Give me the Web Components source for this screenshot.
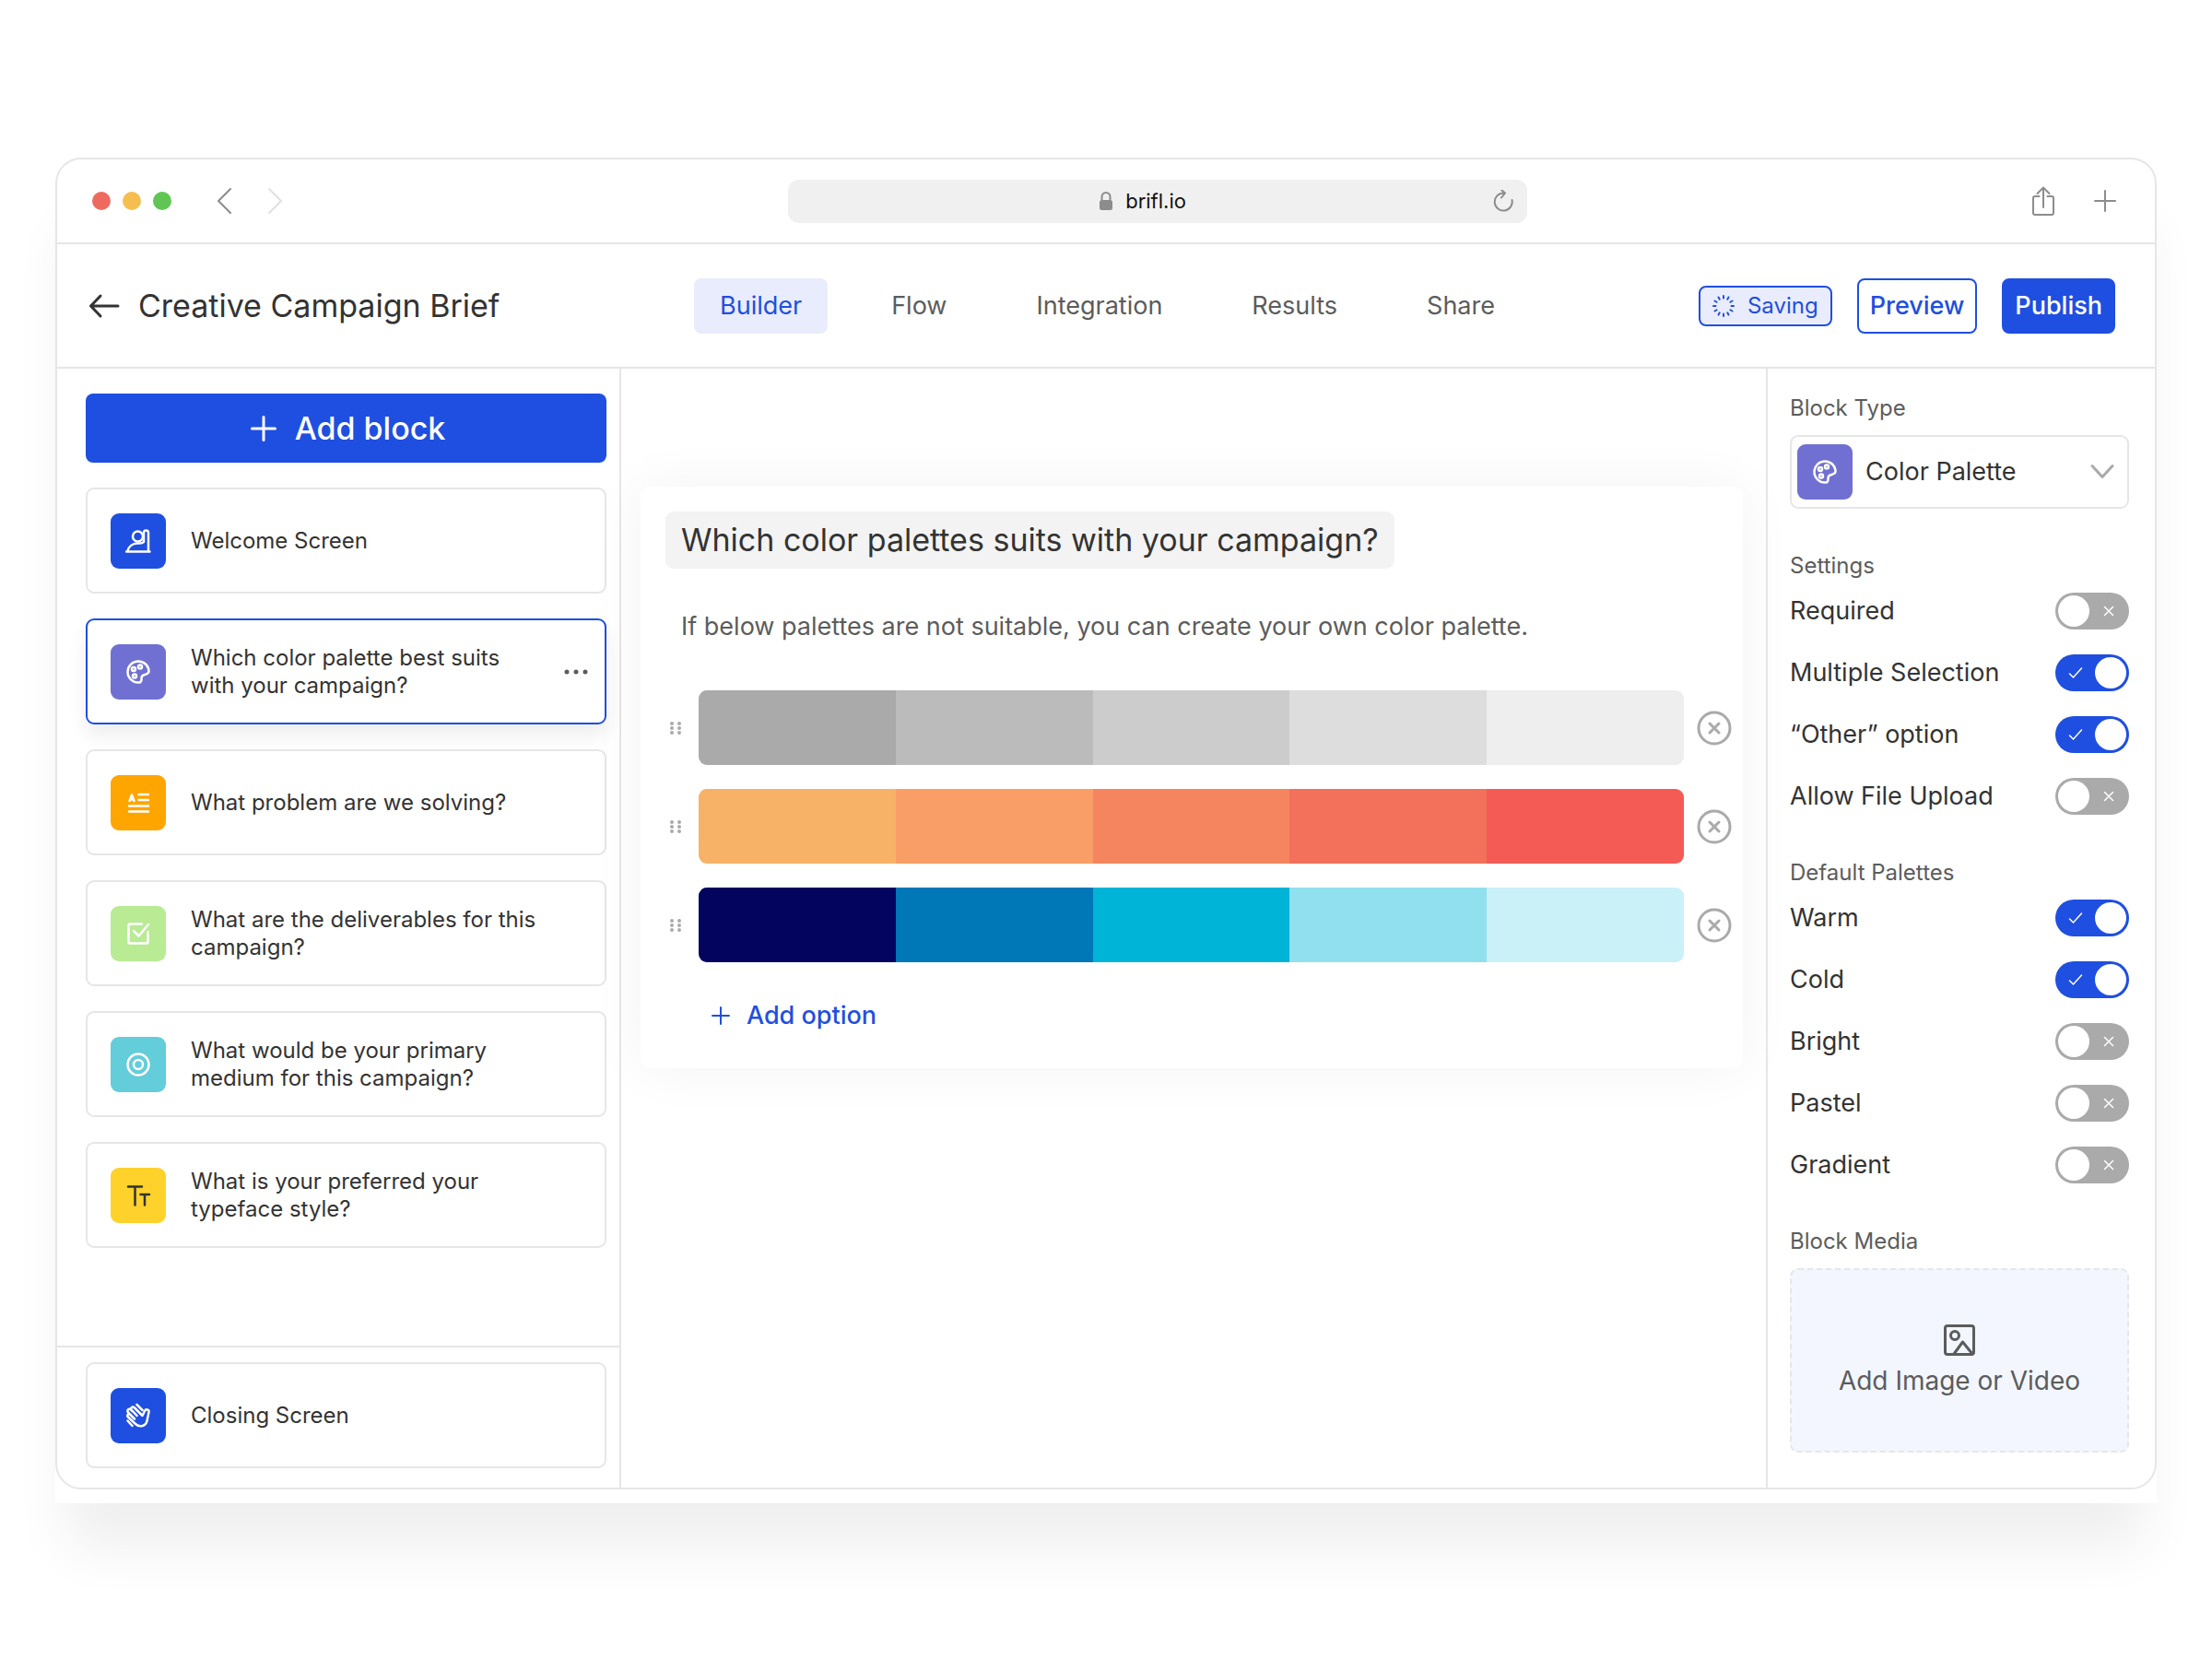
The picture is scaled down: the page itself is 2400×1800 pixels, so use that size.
<!DOCTYPE html>
<html lang="en">
<head>
<meta charset="utf-8">
<meta name="viewport" content="width=device-width, initial-scale=1">
<title>Creative Campaign Brief</title>
<style>
  :root {
    --blue: #1f4fe0;
    --blue-soft: #e9ecfc;
    --ink: #333;
    --ink-soft: #5c5c5c;
    --line: #e6e6e6;
    --muted: #aaa;
  }
  body {
    box-sizing: border-box;
    min-height: 100vh;
    margin: 0;
    padding: 171px 60px 120px;
    background: #fff;
    color: var(--ink);
    font-family: Inter, "Open Sans", sans-serif;
    font-size: 27px;
    line-height: 36px;
  }
</style>
</head>
<body>
<browser-window url="brifl.io">
  <brief-header slot="header" name="Creative Campaign Brief"></brief-header>
  <block-list slot="left">
    <block-item icon="welcome" color="#1f4fe0">Welcome Screen</block-item>
    <block-item icon="palette" color="#7070d2" selected>Which color palette best suits with your campaign?</block-item>
    <block-item icon="text" color="#ffa500">What problem are we solving?</block-item>
    <block-item icon="check" color="#b8eb94">What are the deliverables for this campaign?</block-item>
    <block-item icon="target" color="#63cdd9">What would be your primary medium for this campaign?</block-item>
    <block-item icon="type" color="#ffd22b" ink="#333">What is your preferred your typeface style?</block-item>
    <block-item slot="closing" icon="wave" color="#1f4fe0">Closing Screen</block-item>
  </block-list>
  <question-card>
    <span slot="title">Which color palettes suits with your campaign?</span>
    <span slot="hint">If below palettes are not suitable, you can create your own color palette.</span>
    <palette-row colors="#aaaaaa #bbbbbb #cccccc #dddddd #eeeeee"></palette-row>
    <palette-row colors="#f8b267 #f99e66 #f5855f #f3705a #f45b55"></palette-row>
    <palette-row colors="#03045e #0077b6 #00b4d8 #90e0ef #caf0f8"></palette-row>
  </question-card>
  <block-settings slot="right">
    <settings-group label="Settings">
      <toggle-row>Required</toggle-row>
      <toggle-row checked>Multiple Selection</toggle-row>
      <toggle-row checked>“Other” option</toggle-row>
      <toggle-row>Allow File Upload</toggle-row>
    </settings-group>
    <settings-group label="Default Palettes">
      <toggle-row checked>Warm</toggle-row>
      <toggle-row checked>Cold</toggle-row>
      <toggle-row>Bright</toggle-row>
      <toggle-row>Pastel</toggle-row>
      <toggle-row>Gradient</toggle-row>
    </settings-group>
  </block-settings>
</browser-window>

<script>
const html = String.raw;

// every icon: [viewBox size, markup]
const ICONS = {
  welcome: [28, html`<circle cx="13.5" cy="9" r="5.5"/><path d="M20 15V5a2.5 2.5 0 0 1 5 0v20.5H2C3.5 20 8 16.5 13 16.5c3.5 0 7 .5 7-3M1 25.5h25.5"/>`],
  palette: [28, html`<path d="M15 25.5C8 26 2.500 20.5 2.500 14A11.5 11.5 0 0 1 14 2.500C20.5 2.500 25.5 7.500 25.5 13.5c0 2.500-2.500 3-4.500 3.500-2.500.5-3.500 1.500-3.500 4 0 3-.5 4.500-2.500 4.500Z"/><circle cx="9" cy="11" r="2"/><circle cx="16" cy="8.500" r="2"/><circle cx="10" cy="18.500" r="2"/>`],
  text: [28, html`<path d="M4.500 12 7 5.500 9.500 12M5 10.500h4M14.500 5H25M14.500 11H25M4 17.500h21M4 23.500h21"/>`],
  check: [28, html`<path d="M18 3.500H4.500a1 1 0 0 0-1 1v19a1 1 0 0 0 1 1h19a1 1 0 0 0 1-1V12M9 11l5.500 5.500L25 4"/>`],
  target: [28, html`<circle cx="14" cy="14" r="11.5"/><circle cx="14" cy="14" r="5"/>`],
  type: [28, html`<path d="M3 4.500h15M10.500 4.500v20M16.500 13h9.500M21 13v11.5"/>`],
  wave: [28, html`<path d="m17.500 13-8-8a2 2 0 0 0-3 2.500l6 6.500M7.500 9 6 7.500A2 2 0 0 0 3 10.500l7 7M4.500 12a2 2 0 0 0-1.500 3.500l8 7.500c5 4.500 11.5 2 12.500-3.500l2-9.500c.5-3-3.500-3.500-4.500-1L18.500 14l-1-1M12.500 2l6 6M2.500 19.500 7.500 25"/>`],
  back: [34, html`<path d="M32 17H3M13 6 2.500 17 13 28"/>`],
  plus: [28, html`<path d="M14 1.500v25M1.500 14h25"/>`],
  smallPlus: [20, html`<path d="M10 1v18M1 10h18"/>`],
  newTab: [24, html`<path d="M12 1v22M1 12h22"/>`],
  prev: [28, html`<path d="M20 1 7 14l13 13"/>`],
  next: [28, html`<path d="m8 1 13 13L8 27"/>`],
  lock: [22, html`<path d="M6.500 11V6.500a4.500 4.500 0 0 1 9 0V11"/><rect x="5" y="11" width="12" height="9" rx="1.5" fill="currentColor"/>`],
  reload: [24, html`<path d="M21.500 11A9.500 9.500 0 1 1 12 3.500h2M10 0l4 3.500-4 5"/>`],
  share: [34, html`<path d="M12.500 12H8a2 2 0 0 0-2 2v16a2 2 0 0 0 2 2h18a2 2 0 0 0 2-2V14a2 2 0 0 0-2-2h-4.500M17 24V2.500M10.500 9 17 2.500 23.500 9"/>`],
  down: [26, html`<path d="m2 6.500 11 12 11-12"/>`],
  close: [38, html`<circle cx="19" cy="19" r="17"/><path d="m14 14 10 10m0-10L14 24"/>`],
  image: [36, html`<rect x="2.5" y="2.5" width="31" height="31" rx="2.5"/><circle cx="13" cy="13" r="4.5"/><path d="m12 33 9.500-13L32 33"/>`],
  spinner: [28, Array.from({ length: 12 }, (_, i) =>
    html`<path d="M14 3v2.500" transform="rotate(${i * 30} 14 14)"/>`).join('')],
  grip: [16, [3, 8, 13].map(y =>
    html`<circle cx="4" cy="${y}" r="1"/><circle cx="12" cy="${y}" r="1"/>`).join('')],
  dots: [28, [4, 14, 24].map(x =>
    html`<circle cx="${x}" cy="14" r="1.5" fill="currentColor"/>`).join('')],
};

function icon(name, stroke = 2) {
  const [size, body] = ICONS[name];
  return html`<svg width="${size}" height="${size}" viewBox="0 0 ${size} ${size}" fill="none" stroke="currentColor" stroke-width="${stroke}" stroke-linecap="round" stroke-linejoin="round" aria-hidden="true">${body}</svg>`;
}

const RESET = html`
  <style>
    * { box-sizing: border-box; }
    button, input, select { font: inherit; color: inherit; margin: 0; }
    button { background: none; border: 0; padding: 0; cursor: pointer; }
    svg { display: block; flex: none; }
  </style>
`;

class BaseElement extends HTMLElement {
  connectedCallback() {
    if (this.shadowRoot) return;
    this.attachShadow({ mode: 'open' });
    this.shadowRoot.innerHTML = RESET + this.render();
  }
}

class BrowserWindow extends BaseElement {
  render() {
    return html`
      <style>
        :host {
          display: block;
          padding-bottom: 15px;
          border-radius: 30px 30px 0 0;
          background: #fff;
          box-shadow: 0 60px 60px -12px rgba(0, 0, 0, .065);
        }
        .frame {
          border: 2px solid var(--line);
          border-radius: 28px;
        }
        .bar {
          display: grid;
          grid-template-columns: 13fr 802px 11fr;
          align-items: center;
          height: 92px;
          padding: 0 42px 0 38px;
          border-bottom: 2px solid var(--line);
          color: #8c8c8c;
        }
        .group { display: flex; align-items: center; }
        .lights { display: flex; gap: 13px; margin-right: 44px; }
        .lights i { width: 20px; height: 20px; border-radius: 50%; }
        .arrows { gap: 26px; display: flex; }
        .arrows button:last-child { color: #e0e0e0; }
        .url {
          display: grid;
          grid-template-columns: 1fr 36px;
          align-items: center;
          height: 47px;
          padding: 0 14px;
          border-radius: 12px;
          background: #f0f0f0;
        }
        .url button { justify-self: end; }
        .address {
          display: flex;
          align-items: center;
          justify-content: center;
          gap: 10px;
        }
        .address input {
          field-sizing: content;
          border: 0;
          padding: 0;
          background: none;
          color: #111;
          font-size: 22px;
          line-height: 28px;
        }
        .tools { justify-content: flex-end; gap: 38px; }
        .body {
          display: grid;
          grid-template-columns: 612px minmax(0, 1fr) 422px;
        }
        .left { border-right: 2px solid var(--line); }
        .right { border-left: 2px solid var(--line); }
        .left, .right { display: grid; }
      </style>
      <div class="frame">
        <div class="bar">
          <div class="group">
            <div class="lights">
              <i style="background: #ee6a5f"></i>
              <i style="background: #f5bf4f"></i>
              <i style="background: #61c554"></i>
            </div>
            <div class="arrows">
              <button aria-label="Back">${icon('prev')}</button>
              <button aria-label="Forward">${icon('next')}</button>
            </div>
          </div>
          <div class="url">
            <div class="address">
              ${icon('lock')}
              <input type="text" size="6" aria-label="Address" value="${this.getAttribute('url')}">
            </div>
            <button aria-label="Reload">${icon('reload')}</button>
          </div>
          <div class="group tools">
            <button aria-label="Share">${icon('share')}</button>
            <button aria-label="New tab">${icon('newTab')}</button>
          </div>
        </div>
        <slot name="header"></slot>
        <div class="body">
          <div class="left"><slot name="left"></slot></div>
          <main><slot></slot></main>
          <div class="right"><slot name="right"></slot></div>
        </div>
      </div>
    `;
  }
}

class BriefHeader extends BaseElement {
  render() {
    return html`
      <style>
        :host {
          display: grid;
          grid-template-columns: 1fr auto 1fr;
          align-items: center;
          height: 133px;
          padding: 0 31px 0 34px;
          border-bottom: 2px solid var(--line);
        }
        .title { display: flex; align-items: center; gap: 20px; }
        h1 { margin: 0; font-size: 34px; font-weight: 400; line-height: 44px; }
        nav { display: flex; gap: 41px; }
        a {
          padding: 12px 28px;
          border-radius: 8px;
          color: var(--ink-soft);
          text-decoration: none;
        }
        a[aria-current] { background: var(--blue-soft); color: var(--blue); }
        .actions {
          display: flex;
          align-items: center;
          justify-content: flex-end;
          gap: 27px;
          margin-right: 12px;
        }
        .saving {
          display: flex;
          align-items: center;
          gap: 12px;
          height: 44px;
          padding: 0 13px 0 11px;
          border: 2px solid var(--blue);
          border-radius: 8px;
          background: var(--blue-soft);
          color: var(--blue);
          font-size: 24px;
        }
        .actions button {
          height: 60px;
          padding: 0 12px;
          border: 2px solid var(--blue);
          border-radius: 8px;
          color: var(--blue);
          font-weight: 500;
        }
        .actions .primary { background: var(--blue); color: #fff; }
      </style>
      <div class="title">
        <button aria-label="Back to briefs">${icon('back', 3)}</button>
        <h1>${this.getAttribute('name')}</h1>
      </div>
      <nav>
        <a href="#builder" aria-current="page">Builder</a>
        <a href="#flow">Flow</a>
        <a href="#integration">Integration</a>
        <a href="#results">Results</a>
        <a href="#share">Share</a>
      </nav>
      <div class="actions">
        <span class="saving" role="status">${icon('spinner')}Saving</span>
        <button>Preview</button>
        <button class="primary">Publish</button>
      </div>
    `;
  }
}

class BlockList extends BaseElement {
  render() {
    return html`
      <style>
        :host { display: flex; flex-direction: column; }
        .blocks {
          display: grid;
          gap: 27px;
          padding: 27px 14px 106px 31px;
        }
        .add {
          display: flex;
          align-items: center;
          justify-content: center;
          gap: 20px;
          height: 75px;
          padding-left: 4px;
          border-radius: 8px;
          background: var(--blue);
          color: #fff;
          font-size: 34px;
          font-weight: 500;
        }
        .closing {
          margin-top: auto;
          padding: 16px 14px 21px 31px;
          border-top: 2px solid var(--line);
        }
      </style>
      <div class="blocks">
        <button class="add">${icon('plus', 3)}Add block</button>
        <slot></slot>
      </div>
      <div class="closing"><slot name="closing"></slot></div>
    `;
  }
}

class BlockItem extends BaseElement {
  render() {
    const selected = this.hasAttribute('selected');
    return html`
      <style>
        :host {
          box-sizing: border-box;
          display: grid;
          grid-template-columns: 60px 1fr 28px;
          align-items: center;
          gap: 27px;
          height: 115px;
          padding: 0 17px 0 25px;
          border: 2px solid var(--line);
          border-radius: 9px;
          background: #fff;
          font-size: 24px;
          line-height: 30px;
        }
        :host([selected]) {
          border-color: var(--blue);
          box-shadow: 0 12px 20px rgba(0, 0, 0, .07);
        }
        .tile {
          display: grid;
          place-items: center;
          height: 60px;
          border-radius: 9px;
          background: ${this.getAttribute('color')};
          color: ${this.getAttribute('ink') || '#fff'};
        }
        button { color: var(--ink-soft); }
      </style>
      <div class="tile">${icon(this.getAttribute('icon'), 2.5)}</div>
      <div><slot></slot></div>
      ${selected ? html`<button aria-label="Block options">${icon('dots')}</button>` : ''}
    `;
  }
}

class QuestionCard extends BaseElement {
  render() {
    return html`
      <style>
        :host {
          display: block;
          margin: 128px 25px 0 21px;
          padding: 27px 12px 39px 27px;
          border-radius: 10px;
          background: #fff;
          box-shadow: 0 0 60px rgba(0, 0, 0, .05);
        }
        h2 {
          width: fit-content;
          margin: 0 0 45px;
          padding: 9px 17px;
          border-radius: 9px;
          background: #f3f3f3;
          font-size: 34px;
          font-weight: 400;
          line-height: 44px;
        }
        p { margin: 0 0 51px; padding-left: 17px; color: var(--ink-soft); }
        .rows { display: grid; gap: 26px; }
        .add {
          display: flex;
          align-items: center;
          gap: 18px;
          margin: 40px 0 0 50px;
          color: var(--blue);
          font-weight: 500;
        }
      </style>
      <h2><slot name="title"></slot></h2>
      <p><slot name="hint"></slot></p>
      <div class="rows"><slot></slot></div>
      <button class="add">${icon('smallPlus')}Add option</button>
    `;
  }
}

class PaletteRow extends BaseElement {
  render() {
    const swatches = this.getAttribute('colors').split(' ')
      .map(color => html`<i style="background: ${color}"></i>`).join('');
    return html`
      <style>
        :host {
          display: grid;
          grid-template-columns: 22px 1fr 38px;
          gap: 14px;
          align-items: center;
          color: var(--muted);
        }
        :host > svg, .grip { justify-self: center; }
        .swatches {
          display: grid;
          grid-auto-flow: column;
          grid-auto-columns: 1fr;
          height: 81px;
          border-radius: 9px;
          overflow: hidden;
        }
      </style>
      <span class="grip">${icon('grip')}</span>
      <div class="swatches">${swatches}</div>
      <button aria-label="Remove palette">${icon('close', 3)}</button>
    `;
  }
}

class BlockSettings extends BaseElement {
  render() {
    return html`
      <style>
        :host { display: block; padding: 28px 28px 36px 24px; }
        .label {
          display: block;
          color: var(--ink-soft);
          font-size: 24px;
          line-height: 30px;
        }
        .type {
          display: grid;
          grid-template-columns: 60px 1fr 26px;
          gap: 14px;
          align-items: center;
          height: 80px;
          margin: 14px 0 47px;
          padding: 0 14px 0 6px;
          border: 2px solid var(--line);
          border-radius: 9px;
        }
        .type select {
          appearance: none;
          border: 0;
          padding: 0;
          background: none;
        }
        .type .down { color: var(--muted); }
        .tile {
          display: grid;
          place-items: center;
          height: 60px;
          border-radius: 9px;
          background: #7070d2;
          color: #fff;
        }
        .media {
          display: flex;
          flex-direction: column;
          align-items: center;
          justify-content: center;
          gap: 8px;
          width: 100%;
          height: 200px;
          margin-top: 14px;
          border: 2px dashed var(--line);
          border-radius: 9px;
          background: #f3f6ff;
          color: var(--ink-soft);
          font-size: 28px;
        }
      </style>
      <label class="label" for="type">Block Type</label>
      <div class="type">
        <div class="tile">${icon('palette', 2.5)}</div>
        <select id="type"><option>Color Palette</option></select>
        <span class="down">${icon('down', 3)}</span>
      </div>
      <slot></slot>
      <span class="label">Block Media</span>
      <button class="media">${icon('image', 3)}Add Image or Video</button>
    `;
  }
}

class SettingsGroup extends BaseElement {
  render() {
    return html`
      <style>
        :host { display: block; margin-bottom: 48px; }
        h3 {
          margin: 0 0 14px;
          color: var(--ink-soft);
          font-size: 24px;
          font-weight: 400;
          line-height: 30px;
        }
        .rows { display: grid; gap: 27px; }
      </style>
      <h3>${this.getAttribute('label')}</h3>
      <div class="rows"><slot></slot></div>
    `;
  }
}

class ToggleRow extends BaseElement {
  render() {
    const checked = this.hasAttribute('checked') ? 'checked' : '';
    return html`
      <style>
        :host { display: block; }
        label { display: flex; align-items: center; justify-content: space-between; height: 40px; }
        .switch { display: grid; align-items: center; width: 80px; height: 40px; }
        .switch > * { grid-area: 1 / 1; }
        input {
          appearance: none;
          display: flex;
          width: 80px;
          height: 40px;
          padding: 3px;
          border-radius: 20px;
          background: var(--muted);
        }
        input::before { content: ""; width: 34px; height: 34px; border-radius: 50%; background: #fff; }
        input:checked { justify-content: flex-end; background: var(--blue); }
        svg { color: #fff; pointer-events: none; }
        .on { display: none; margin-left: 14px; }
        .off { justify-self: end; margin-right: 14px; }
        input:checked ~ .on { display: block; }
        input:checked ~ .off { display: none; }
      </style>
      <label>
        <slot></slot>
        <span class="switch">
          <input type="checkbox" role="switch" ${checked}>
          <svg class="on" width="16" height="16" viewBox="0 0 16 16" fill="none" stroke="currentColor" stroke-width="1.5" stroke-linecap="round"><path d="m1.500 9 4 4 9-10"/></svg>
          <svg class="off" width="16" height="16" viewBox="0 0 16 16" fill="none" stroke="currentColor" stroke-width="1.5" stroke-linecap="round"><path d="m3.500 3.500 9 9m0-9-9 9"/></svg>
        </span>
      </label>
    `;
  }
}

customElements.define('browser-window', BrowserWindow);
customElements.define('brief-header', BriefHeader);
customElements.define('block-list', BlockList);
customElements.define('block-item', BlockItem);
customElements.define('question-card', QuestionCard);
customElements.define('palette-row', PaletteRow);
customElements.define('block-settings', BlockSettings);
customElements.define('settings-group', SettingsGroup);
customElements.define('toggle-row', ToggleRow);
</script>
</body>
</html>
